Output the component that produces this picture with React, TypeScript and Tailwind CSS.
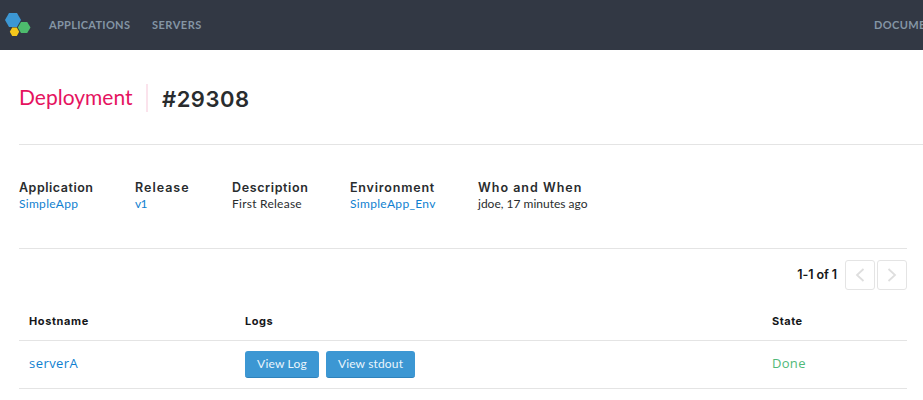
import type { ReactNode } from "react";

function Logo() {
  return (
    <svg width="26" height="24" viewBox="0 0 26 24" className="block shrink-0">
      <path d="M4 0h8l4 7-4 7H4L0 7z" fill="#3c97d3" />
      <path d="M16 9h6.200l3.300 5.500-3.300 5.500H16l-3.200-5.500z" fill="#4dbb6d" />
      <path d="M7.200 14.500h4.600l2.400 4.200-2.400 4.300H7.200l-2.400-4.300z" fill="#f5c81c" />
    </svg>
  );
}

function Meta({ label, width, spacing, children }: { label: string; width: string; spacing: string; children: ReactNode }) {
  return (
    <div className={`shrink-0 ${width}`}>
      <div className={`pt-px font-['Inter',sans-serif] text-[12.500px] leading-4 font-semibold ${spacing}`}>{label}</div>
      <div className="text-[12px] leading-4">{children}</div>
    </div>
  );
}

function PageButton({ d }: { d: string }) {
  return (
    <button className="flex h-[30px] w-[30px] items-center justify-center rounded-[3px] border border-[#e4e4e4] bg-white">
      <svg width="10" height="14" viewBox="0 0 10 14" fill="none" stroke="#dedede" strokeWidth="1.800">
        <path d={d} />
      </svg>
    </button>
  );
}

export default function App() {
  return (
    <div className="h-[400px] w-[923px] overflow-hidden bg-white font-['Lato',sans-serif] whitespace-nowrap text-[#292c2e]">
      <header className="flex h-[50px] items-center bg-[#323844] pl-[5px] text-[11px] font-bold text-[#8495a4]">
        <Logo />
        <nav className="flex flex-1 pl-[18px]">
          <a className="w-[103px] tracking-[0.300px]">APPLICATIONS</a>
          <a className="tracking-[0.500px]">SERVERS</a>
        </nav>
        <a className="w-[49px] overflow-hidden tracking-[0.400px]">DOCUMENTATION</a>
      </header>

      <div className="ml-[19px] flex h-[95px] items-center border-b border-[#e4e4e4] pt-px">
        <h1 className="w-[127px] pb-px text-[21px] leading-7 text-[#e5135f]">Deployment</h1>
        <div className="mr-[14px] h-7 w-[2px] bg-[#fbe3ec]" />
        <h2 className="pt-[3px] font-['Inter',sans-serif] text-[22px] leading-7 font-semibold tracking-[0.500px]">#29308</h2>
      </div>

      <main className="mr-4 ml-[19px]">
        <section className="flex h-[104px] border-b border-[#e4e4e4] pt-[34px]">
          <Meta label="Application" width="w-[116px]" spacing="tracking-[0.520px]">
            <a className="tracking-[0.300px] text-[#0f7fd0]">SimpleApp</a>
          </Meta>
          <Meta label="Release" width="w-[97px]" spacing="tracking-[1.000px]">
            <a className="tracking-[-0.700px] text-[#0f7fd0]">v1</a>
          </Meta>
          <Meta label="Description" width="w-[118px]" spacing="tracking-[0.620px]">
            <span className="tracking-[0.250px]">First Release</span>
          </Meta>
          <Meta label="Environment" width="w-[128px]" spacing="tracking-[0.800px]">
            <a className="tracking-[0.320px] text-[#0f7fd0]">SimpleApp_Env</a>
          </Meta>
          <Meta label="Who and When" width="w-[140px]" spacing="tracking-[1.000px]">jdoe, 17 minutes ago</Meta>
        </section>

        <div className="flex h-[52px] items-center justify-end gap-[2px]">
          <span className="mr-[6px] pt-px font-['Inter',sans-serif] text-[12.500px] font-semibold tracking-[-0.100px] text-[#151719]">1-1 of 1</span>
          <PageButton d="M8.500 1 2 7l6.500 6" />
          <PageButton d="M1.500 1 8 7l-6.500 6" />
        </div>

        <table className="w-full table-fixed border-collapse text-left">
          <colgroup>
            <col className="w-[216px]" />
            <col className="w-[527px]" />
            <col />
          </colgroup>
          <thead>
            <tr className="h-[39px] border-b border-[#e4e4e4] font-['Inter',sans-serif] text-[11px] text-[#151719]">
              <th className="pt-[2px] pl-[10px] font-bold tracking-[0.600px]">Hostname</th>
              <th className="pt-[2px] pl-[10px] font-bold tracking-[0.500px]">Logs</th>
              <th className="pt-[2px] pl-[10px] font-bold tracking-[0.500px]">State</th>
            </tr>
          </thead>
          <tbody>
            <tr className="h-12 border-b border-[#e4e4e4] text-[13px]">
              <td className="pl-[10px] font-['Open_Sans',sans-serif] tracking-[0.450px] text-[#0f7fd0]">serverA</td>
              <td className="pl-[10px]">
                <div className="flex gap-[7px] text-[12px] text-[#eaf5fc]">
                  <button className="h-[27px] w-[74px] rounded-[3px] border-b border-[#2f82bb] bg-[#3c97d3] tracking-[0.200px]">View Log</button>
                  <button className="h-[27px] w-[89px] rounded-[3px] border-b border-[#2f82bb] bg-[#3c97d3] tracking-[0.150px]">View stdout</button>
                </div>
              </td>
              <td className="pl-[10px] font-['Open_Sans',sans-serif] tracking-[0.300px] text-[#50b978]">Done</td>
            </tr>
          </tbody>
        </table>
      </main>
    </div>
  );
}
